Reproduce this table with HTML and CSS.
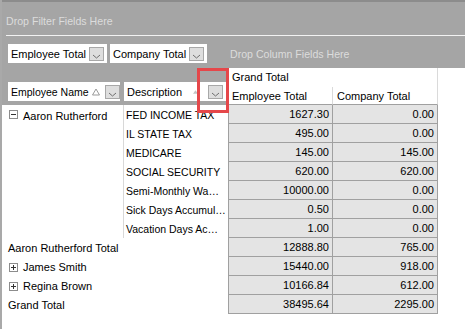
FILE: index.html
```html
<!DOCTYPE html>
<html lang="en">
<head>
    <meta charset="UTF-8">
    <title>Pivot Grid</title>
    <link rel="stylesheet" href="styles.css">
</head>
<body>
    <div class="pivot">
        <div class="filter-area">Drop Filter Fields Here</div>
        <div class="separator"></div>
        <div class="data-area">
            <div class="data-fields">
                <div class="field">Employee Total
                    <span class="dd"><svg viewBox="0 0 13 12"><polyline points="3,7 6.5,10 10,7"/></svg></span>
                </div>
                <div class="field">Company Total
                    <span class="dd"><svg viewBox="0 0 13 12"><polyline points="3,7 6.5,10 10,7"/></svg></span>
                </div>
            </div>
            <div class="drop-hint">Drop Column Fields Here</div>
        </div>

        <div class="grid">
            <div class="row-fields">
                <div class="field field-name">Employee Name
                    <svg class="sort" viewBox="0 0 8 8"><polygon points="4,1 7.5,7 0.5,7"/></svg>
                    <span class="dd"><svg viewBox="0 0 13 12"><polyline points="3,7 6.5,10 10,7"/></svg></span>
                </div>
                <div class="field field-desc">Description
                    <svg class="sort-small" viewBox="0 0 6 4"><polygon points="3,0 6,4 0,4"/></svg>
                    <span class="dd"><svg viewBox="0 0 13 12"><polyline points="3,7 6.5,10 10,7"/></svg></span>
                </div>
            </div>
            <div class="col-head grand">Grand Total</div>
            <div class="col-head sub">Employee Total</div>
            <div class="col-head sub">Company Total</div>

            <div class="emp"><span class="pm"><svg viewBox="0 0 9 9"><rect x="0.5" y="0.5" width="8" height="8"/><line x1="2" y1="4.5" x2="7" y2="4.5"/></svg></span>Aaron Rutherford</div>

            <div class="desc">FED INCOME TAX</div>
            <div class="num first">1627.30</div><div class="num">0.00</div>
            <div class="desc">IL STATE TAX</div>
            <div class="num first">495.00</div><div class="num">0.00</div>
            <div class="desc">MEDICARE</div>
            <div class="num first">145.00</div><div class="num">145.00</div>
            <div class="desc">SOCIAL SECURITY</div>
            <div class="num first">620.00</div><div class="num">620.00</div>
            <div class="desc">Semi-Monthly Wa…</div>
            <div class="num first">10000.00</div><div class="num">0.00</div>
            <div class="desc">Sick Days Accumul…</div>
            <div class="num first">0.50</div><div class="num">0.00</div>
            <div class="desc">Vacation Days Ac…</div>
            <div class="num first">1.00</div><div class="num">0.00</div>

            <div class="total">Aaron Rutherford Total</div>
            <div class="num first">12888.80</div><div class="num">765.00</div>
            <div class="total"><span class="pm"><svg viewBox="0 0 9 9"><rect x="0.5" y="0.5" width="8" height="8"/><line x1="2" y1="4.5" x2="7" y2="4.5"/><line x1="4.5" y1="2" x2="4.5" y2="7"/></svg></span>James Smith</div>
            <div class="num first">15440.00</div><div class="num">918.00</div>
            <div class="total"><span class="pm"><svg viewBox="0 0 9 9"><rect x="0.5" y="0.5" width="8" height="8"/><line x1="2" y1="4.5" x2="7" y2="4.5"/><line x1="4.5" y1="2" x2="4.5" y2="7"/></svg></span>Regina Brown</div>
            <div class="num first">10166.84</div><div class="num">612.00</div>
            <div class="total">Grand Total</div>
            <div class="num first">38495.64</div><div class="num">2295.00</div>
        </div>

        <div class="highlight"></div>
    </div>
</body>
</html>
```

FILE: styles.css
```css
body {
    margin: 0;
    background: white;
    font-family: 'Liberation Sans', Arial, sans-serif;
    font-size: 11px;
    color: #000;
}

.pivot {
    position: relative;
    width: 465px;
    height: 329px;
    box-sizing: border-box;
    border-left: 2px solid #a9a9a9;
    overflow: hidden;
}

.filter-area {
    height: 35px;
    box-sizing: border-box;
    border-top: 2px solid #8c8c8c;
    background: #a5a5a5;
    color: #dcdcdc;
    padding: 13px 4px 0;
    font-size: 10.6px;
}

.separator {
    height: 1px;
    background-image: linear-gradient(to right, #a5a5a5 4px, #f2f2f2 4px);
}

.data-area {
    display: flex;
    height: 32px;
    background: #a5a5a5;
}

.data-fields {
    display: flex;
    gap: 3px;
    width: 226px;
    padding: 8px 0 0 6px;
    box-sizing: border-box;
}

.drop-hint {
    color: #dcdcdc;
    padding: 12px 0 0 2px;
    font-size: 10.6px;
}

.field {
    display: flex;
    align-items: center;
    height: 19px;
    box-sizing: border-box;
    background: white;
    padding: 0 3px 0 3px;
    gap: 3px;
    white-space: nowrap;
}

.dd {
    flex: none;
    display: inline-block;
    width: 15px;
    height: 14px;
    box-sizing: border-box;
    background: #dedede;
    border: 1px solid #a8a8a8;
}

.dd svg {
    display: block;
    width: 13px;
    height: 12px;
    fill: none;
    stroke: #6e6e6e;
    stroke-width: 1;
}

.grid {
    display: grid;
    grid-template-columns: 121px 105px 105px 105px;
    grid-template-rows: 19px 18px repeat(11, 19px);
}

.row-fields {
    grid-column: 1 / 3;
    grid-row: 1 / 3;
    background: #a5a5a5;
    display: flex;
    align-items: flex-end;
    gap: 4px;
    padding: 0 0 4px 6px;
}

.field-name {
    flex: none;
    width: 112px;
    padding-right: 2px;
    font-size: 10.5px;
    overflow: hidden;
}

.field-desc {
    flex: 1;
    padding-right: 5px;
}

.field-name .sort {
    flex: none;
    width: 8px;
    height: 8px;
    margin-left: auto;
    margin-right: 2px;
    fill: none;
    stroke: #8e8e8e;
    stroke-width: 0.9;
}

.field-desc .sort-small {
    flex: none;
    width: 5px;
    height: 4px;
    margin-left: auto;
    margin-right: 7px;
    fill: #c4c4c4;
}

.col-head {
    padding: 0 4px;
    line-height: 19px;
    white-space: nowrap;
    border-right: 1px solid #dadada;
}

.col-head.grand {
    grid-column: 3 / 5;
}

.col-head.sub {
    line-height: 18px;
    border-bottom: 1px solid #a0a0a0;
}

.emp {
    grid-column: 1;
    grid-row: 3 / 10;
    display: flex;
    align-items: flex-start;
    padding: 5px 0 0 7px;
    gap: 5px;
    white-space: nowrap;
}

.pm svg {
    display: block;
    width: 9px;
    height: 9px;
    fill: white;
    stroke: #8c8c8c;
    stroke-width: 1;
}

.pm svg line {
    stroke: #333;
}

.desc {
    grid-column: 2;
    border-left: 1px solid #d8d8d8;
    padding: 0 0 0 2px;
    line-height: 20px;
    font-size: 10.5px;
    white-space: nowrap;
    overflow: hidden;
}

.total {
    grid-column: 1 / 3;
    display: flex;
    align-items: center;
    gap: 5px;
    padding: 1px 0 0 6px;
    white-space: nowrap;
}

.total .pm {
    margin-left: 1px;
}

.num {
    background: #e4e4e4;
    border-right: 1px solid #a0a0a0;
    border-bottom: 1px solid #a0a0a0;
    text-align: right;
    padding-right: 3px;
    line-height: 19px;
}

.num.first {
    border-left: 1px solid #a0a0a0;
}

.highlight {
    position: absolute;
    left: 195px;
    top: 68px;
    width: 32px;
    height: 45px;
    box-sizing: border-box;
    border: 3px solid #e5474a;
}
```
